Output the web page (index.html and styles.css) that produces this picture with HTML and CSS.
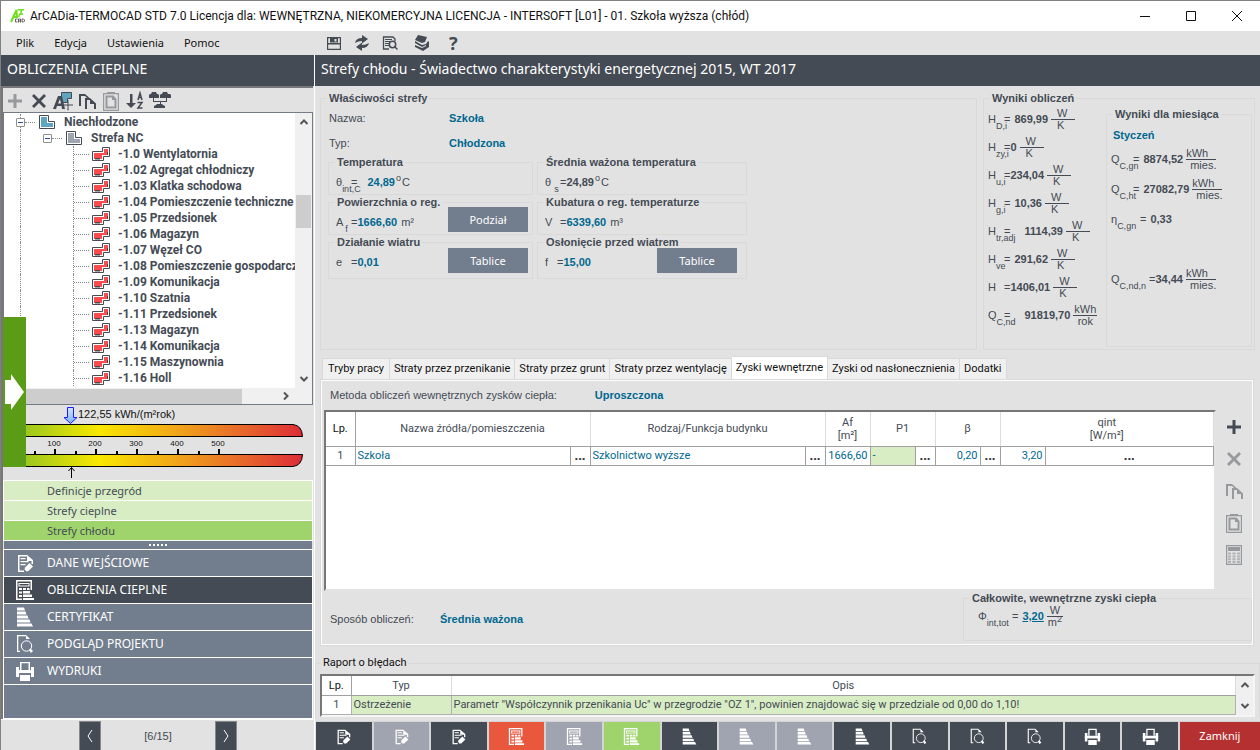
FILE: index.html
```html
<!DOCTYPE html>
<html lang="pl">
<head>
<meta charset="utf-8">
<title>ArCADia-TERMOCAD</title>
<link rel="stylesheet" href="styles.css">
</head>
<body>
<svg class="defs" aria-hidden="true">
  <symbol id="i-edit" viewBox="0 0 20 20"><path d="M3 2h9v1.500H4.500v14H9V19H3zM12 2l6 5v4h-1.500V8H12z"/><path d="M5.500 5h5v1.200h-5zM5.500 8h8v1.200h-8zM5.500 11h5v1.200h-5z"/><path d="M14.500 10l3.500 3.500-4.500 4.500-2 .5-2-2 .5-2z"/></symbol>
  <symbol id="i-calc" viewBox="0 0 20 20"><path fill-rule="evenodd" d="M1 0h16v10h-1.500V1.500h-13v17H7V20H1zM3.500 3h11v3.500h-11zM4.500 4v1.500h9V4z"/><path d="M4 8h3v2H4zM8 8h3v2H8zM12 8h2.500v2H12zM4 11.500h3v2H4zM4 15h3v2H4zM8 11h7v2.500H8zM8 14.500h9V17H8zM8 18h11v2H8z"/></symbol>
  <symbol id="i-bars" viewBox="0 0 20 20"><path d="M2 .5h7l1 3H2zM2 4.500h8.500l1 3H2zM2 8.500h10.500l1 3H2zM2 12.500h12.500l1 3H2zM2 16.500h14.500l1.500 3H2z"/></symbol>
  <symbol id="i-view" viewBox="0 0 20 20"><path d="M2 1h9l4 4h-4V2.200H3.300v14.600H5V18H2z"/><circle cx="11.500" cy="12" r="5.200" fill="none" stroke="currentColor" stroke-width="1"/><path d="M14 16l1.500-1.500L18 17l-2 2z"/></symbol>
  <symbol id="i-print" viewBox="0 0 20 20"><path fill-rule="evenodd" d="M5 1h10v8h-1.500V2.300h-7V9H5zM1 6h3v4h12V6h3v10h-3v-4H4v4H1z"/><path d="M1 9h18v3H1zM5 14h10v6H5z"/></symbol>
  <symbol id="i-plus" viewBox="0 0 20 20"><path d="M8.500 3h3v5.500H17v3h-5.500V17h-3v-5.500H3v-3h5.500z"/></symbol>
  <symbol id="i-x" viewBox="0 0 20 20"><path d="M3 5l2-2 5 5 5-5 2 2-5 5 5 5-2 2-5-5-5 5-2-2 5-5z"/></symbol>
  <symbol id="i-copy" viewBox="0 0 20 20"><path d="M2 3h6l4 3.500V9h-1.500V7.500L8 5H4v10H2zM8 7h5l6 5.500V18h-2v-5h-4V9h-3v9H8z"/></symbol>
  <symbol id="i-paste" viewBox="0 0 20 20"><path fill-rule="evenodd" d="M6 1h8v1h4v18H2V2h4zM3.200 3.200v15.600h13.600V3.200zM4.500 4.500h8L15.500 8v9.500h-11zM6.500 6.500v9h7V9H11V6.500z"/></symbol>
  <symbol id="i-table" viewBox="0 0 20 20"><path fill-rule="evenodd" d="M2 0h16v20H2zM3.200 1.200v17.600h13.600V1.200z"/><path d="M4 2h12v4H4z"/><path opacity=".65" d="M4 7.500h3v2H4zM8.500 7.500h3v2h-3zM13 7.500h3v2h-3zM4 10.500h3v2H4zM8.500 10.500h3v2h-3zM13 10.500h3v2h-3zM4 13.300h3v2H4zM8.500 13.300h3v2h-3zM13 13.300h3v2h-3zM4 16h3v2H4zM8.500 16h3v2h-3zM13 16h3v2h-3z"/></symbol>
  <symbol id="i-room" viewBox="0 0 18 16"><path fill="#fff" stroke="#444b54" d="M.5 5.500h10v-4h7v9h-6v4H.5z"/><path fill="#fb4b4d" d="M2 7h10V3h4v6h-6v4H2z"/><path fill="#444b54" d="M3 12h5v1.500H3zM15 6h1v3h-1z"/></symbol>
  <symbol id="i-zone" viewBox="0 0 16 14"><path fill="#fff" stroke="#444b54" d="M.5.500h9v6h6v7H.5z"/><path d="M2 2h6v6h6v4H2z"/></symbol>
  <symbol id="i-up" viewBox="0 0 10 10"><path fill="none" stroke="currentColor" stroke-width="2" d="M1.500 7L5 3.500 8.500 7"/></symbol>
  <symbol id="i-down" viewBox="0 0 10 10"><path fill="none" stroke="currentColor" stroke-width="2" d="M1.500 3L5 6.500 8.500 3"/></symbol>
  <symbol id="i-right" viewBox="0 0 10 10"><path fill="none" stroke="currentColor" stroke-width="2" d="M3 1.500L6.500 5 3 8.500"/></symbol>
</svg>

<header class="titlebar">
  <svg class="logo" viewBox="0 0 16 16"><path fill="none" stroke="#6fe01c" stroke-width="2" d="M1 14L6.500 2l.5 8M3 9h4"/><path fill="none" stroke="#6fe01c" stroke-width="1.500" d="M7.500 1.800H14M11.500 2l-1 5M8.500 9l1.500-3h3"/><path fill="none" stroke="#555" stroke-width=".9" d="M7.500 11H5.500v3h2M8.500 14.500V11h2v3.500M8.500 13h2M12 11v3h1.500l1-1v-1l-1-1z"/></svg>
  <h1 class="title">ArCADia-TERMOCAD STD 7.0 Licencja dla: WEWNĘTRZNA, NIEKOMERCYJNA LICENCJA - INTERSOFT [L01] - 01. Szkoła wyższa (chłód)</h1>
  <button class="win" aria-label="Minimalizuj"><svg viewBox="0 0 12 12"><path d="M1 6.500h10"/></svg></button>
  <button class="win" aria-label="Maksymalizuj"><svg viewBox="0 0 12 12"><path d="M1.500 1.500h9v9h-9z"/></svg></button>
  <button class="win" aria-label="Zamknij okno"><svg viewBox="0 0 12 12"><path d="M1 1l10 10M11 1L1 11"/></svg></button>
</header>

<nav class="menubar">
  <div class="menus"><button>Plik</button><button>Edycja</button><button>Ustawienia</button><button>Pomoc</button></div>
  <div class="quick">
    <button aria-label="Zapisz"><svg viewBox="0 0 16 16"><path fill-rule="evenodd" d="M1 2h14v13H1zM2.200 3.200V8h11.600V3.200H12V7.500H4V3.200zM2.200 9.500v4.300h11.600V9.500zM8.500 4h2v2.500h-2z"/></svg></button>
    <button aria-label="Odśwież"><svg viewBox="0 0 16 16"><path d="M1 8q1-5 7-5V0l6 4-6 4.500V6Q4 6 1 8zM15 8q-1 5-7 5v3l-6-4 6-4.500V10q4 0 7-2z"/></svg></button>
    <button aria-label="Podgląd"><svg viewBox="0 0 16 16"><path fill="none" stroke="currentColor" stroke-width="1.300" d="M7 14H1.500V2H11l2 2v2"/><path d="M3 4h7v1H3zM3 6h5v1H3zM3 8h4v1H3zM3 10h4v1H3z"/><circle cx="10.500" cy="9.500" r="3.200" fill="none" stroke="currentColor" stroke-width="1.500"/><path d="M12 12l1-1 3 3-1 1z"/></svg></button>
    <button aria-label="Biblioteka"><svg viewBox="0 0 16 16"><path d="M1 5l3-5 9 2-2 5-3 1zM1 6l7 4 4-1 2-3 1 1v5l-6 4-8-4v-2l7 3 4-2v-1l-4 2-7-4z"/></svg></button>
    <button class="help" aria-label="Pomoc programu">?</button>
  </div>
</nav>

<div class="workspace">
  <aside class="side">
    <h2 class="bar">OBLICZENIA CIEPLNE</h2>
    <div class="side-box">
      <div class="tree-tools">
        <button class="off" aria-label="Dodaj"><svg class="ic"><use href="#i-plus"/></svg></button>
        <button aria-label="Usuń"><svg class="ic"><use href="#i-x"/></svg></button>
        <button aria-label="Wstaw strefę"><svg class="ic" viewBox="0 0 20 20"><path fill="#5ea5c0" stroke="#444b54" d="M8.500 1.500h10v6h-4v4h-6z"/><path fill-rule="evenodd" d="M0 18L5 5h4l3 13H9l-.5-3H4l-1 3zM5 12.500h3L7 8z"/><path d="M14 10h2l-1-1zM14.500 10h1v8h-1zM11 13.500h8v1h-8zM14 18h2l-1 1.500zM19 13l1 1-1 1z"/></svg></button>
        <button aria-label="Kopiuj"><svg class="ic"><use href="#i-copy"/></svg></button>
        <button class="off" aria-label="Wklej"><svg class="ic"><use href="#i-paste"/></svg></button>
        <button aria-label="Sortuj"><svg class="ic" viewBox="0 0 20 20"><path d="M5 3h2.500v9H11l-5 5-5-5h4z"/><path fill="none" stroke="currentColor" stroke-width="1.500" d="M13 9l2-7 2 7M13.500 6.500h3M12.500 11.500H17L13 17h4.500"/></svg></button>
        <button aria-label="Struktura"><svg class="ic wide" viewBox="0 0 22 20"><path d="M0 4l1-1h1l1-2h4l1 2h1l1 1v3H0zM11 4l1-1h1l1-2h4l1 2h2l1 1v3H11zM4 7h1v3h12V7h1v4h-6v3h-1v-3H4zM5 15l2-1 1-1h5l1 1 2 1v2H5z"/></svg></button>
      </div>
      <div class="tree-wrap">
        <div class="tree">
          <div class="node n1"><i class="exp"></i><svg class="zone blue"><use href="#i-zone"/></svg>Niechłodzone</div>
          <div class="node n2"><i class="exp"></i><svg class="zone gray"><use href="#i-zone"/></svg>Strefa NC</div>
          <div class="node n3"><svg class="room"><use href="#i-room"/></svg>-1.0 Wentylatornia</div>
          <div class="node n3"><svg class="room"><use href="#i-room"/></svg>-1.02 Agregat chłodniczy</div>
          <div class="node n3"><svg class="room"><use href="#i-room"/></svg>-1.03 Klatka schodowa</div>
          <div class="node n3"><svg class="room"><use href="#i-room"/></svg>-1.04 Pomieszczenie techniczne</div>
          <div class="node n3"><svg class="room"><use href="#i-room"/></svg>-1.05 Przedsionek</div>
          <div class="node n3"><svg class="room"><use href="#i-room"/></svg>-1.06 Magazyn</div>
          <div class="node n3"><svg class="room"><use href="#i-room"/></svg>-1.07 Węzeł CO</div>
          <div class="node n3"><svg class="room"><use href="#i-room"/></svg>-1.08 Pomieszczenie gospodarcze</div>
          <div class="node n3"><svg class="room"><use href="#i-room"/></svg>-1.09 Komunikacja</div>
          <div class="node n3"><svg class="room"><use href="#i-room"/></svg>-1.10 Szatnia</div>
          <div class="node n3"><svg class="room"><use href="#i-room"/></svg>-1.11 Przedsionek</div>
          <div class="node n3"><svg class="room"><use href="#i-room"/></svg>-1.13 Magazyn</div>
          <div class="node n3"><svg class="room"><use href="#i-room"/></svg>-1.14 Komunikacja</div>
          <div class="node n3"><svg class="room"><use href="#i-room"/></svg>-1.15 Maszynownia</div>
          <div class="node n3"><svg class="room"><use href="#i-room"/></svg>-1.16 Holl</div>
        </div>
        <div class="vscroll"><svg class="arr"><use href="#i-up"/></svg><i class="thumb"></i><svg class="arr"><use href="#i-down"/></svg></div>
        <div class="hscroll"><i class="thumb"></i><svg class="arr"><use href="#i-right"/></svg></div>
      </div>
      <svg class="gauge" viewBox="0 0 309 75" role="img" aria-label="Wskaźnik energii">
        <defs><linearGradient id="heat"><stop offset="0" stop-color="#6fae1e"/><stop offset=".08" stop-color="#9dc81e"/><stop offset=".32" stop-color="#f9e800"/><stop offset=".6" stop-color="#f0a01c"/><stop offset=".85" stop-color="#e5592e"/><stop offset="1" stop-color="#dd2c38"/></linearGradient>
        <linearGradient id="drop" x1="0" x2="0" y1="0" y2="1"><stop offset="0" stop-color="#cfe6fa"/><stop offset="1" stop-color="#7ab2f0"/></linearGradient></defs>
        <path fill="url(#heat)" stroke="#000" d="M0 19.500h290q9 1 9.500 12H0z"/>
        <path fill="url(#heat)" stroke="#000" d="M0 49.500h299.500q-.5 11-9.500 12H0z"/>
        <path fill="url(#drop)" stroke="#1b1bff" d="M64.500 2.500h6v10h3.500L67.500 18.500l-6.500-6h3.500z"/>
        <path fill="#000" d="M31 46h2v3h-2zM51 44h2v5h-2zM72 46h2v3h-2zM92 44h2v5h-2zM113 46h2v3h-2zM133 44h2v5h-2zM154 46h2v3h-2zM174 44h2v5h-2zM195 46h2v3h-2zM215 44h2v5h-2z"/>
        <path fill="none" stroke="#000" d="M68.500 73V62.500M65.500 66l3-3.500 3 3.500"/>
        <text x="75" y="13" class="g-val">122,55 kWh/(m²rok)</text>
        <g class="g-tick"><text x="51" y="41">100</text><text x="92" y="41">200</text><text x="133" y="41">300</text><text x="174" y="41">400</text><text x="215" y="41">500</text></g>
      </svg>
      <div class="subnav"><a href="#">Definicje przegród</a><a href="#">Strefy cieplne</a><a href="#" class="on">Strefy chłodu</a></div>
      <div class="splitter"><i></i><i></i><i></i><i></i><i></i></div>
      <div class="mainnav">
        <a href="#"><svg class="ic"><use href="#i-edit"/></svg>DANE WEJŚCIOWE</a>
        <a href="#" class="on"><svg class="ic"><use href="#i-calc"/></svg>OBLICZENIA CIEPLNE</a>
        <a href="#"><svg class="ic"><use href="#i-bars"/></svg>CERTYFIKAT</a>
        <a href="#"><svg class="ic"><use href="#i-view"/></svg>PODGLĄD PROJEKTU</a>
        <a href="#"><svg class="ic"><use href="#i-print"/></svg>WYDRUKI</a>
        <div class="rest"></div>
      </div>
    </div>
    <div class="pager">
      <button aria-label="Poprzedni"><svg viewBox="0 0 8 14"><path d="M6 1L2 7l4 6"/></svg></button>
      <span>[6/15]</span>
      <button aria-label="Następny"><svg viewBox="0 0 8 14"><path d="M2 1l4 6-4 6"/></svg></button>
    </div>
    <button class="drawer" aria-label="Rozwiń panel"><svg viewBox="0 0 23 40"><path fill="#fff" d="M2 8h6V2l13 18L8 38v-6H2z"/></svg></button>
  </aside>

  <main class="content">
    <h2 class="bar">Strefy chłodu - Świadectwo charakterystyki energetycznej 2015, WT 2017</h2>
    <section class="upper">
      <fieldset class="group props">
        <legend>Właściwości strefy</legend>
        <dl class="pairs"><dt>Nazwa:</dt><dd>Szkoła</dd><dt>Typ:</dt><dd>Chłodzona</dd></dl>
        <div class="prop-grid">
          <fieldset class="group"><legend>Temperatura</legend><div class="f"><span class="s s1">θ<sub>int,C</sub></span>=<b class="blue g9">24,89</b><sup>o</sup>C</div></fieldset>
          <fieldset class="group"><legend>Średnia ważona temperatura</legend><div class="f"><span class="s s1">θ<sub class="far">s</sub></span>=<b>24,89</b><sup>o</sup>C</div></fieldset>
          <fieldset class="group"><legend>Powierzchnia o reg.</legend><div class="f"><span class="s s1">A<sub class="near">f</sub></span>=<b class="blue">1666,60</b><span class="unit">m²</span></div><button class="btn">Podział</button></fieldset>
          <fieldset class="group"><legend>Kubatura o reg. temperaturze</legend><div class="f"><span class="s s1">V</span>=<b class="blue">6339,60</b><span class="unit">m³</span></div></fieldset>
          <fieldset class="group tall"><legend>Działanie wiatru</legend><div class="f"><span class="s s1">e</span>=<b class="blue">0,01</b></div><button class="btn">Tablice</button></fieldset>
          <fieldset class="group tall"><legend>Osłonięcie przed wiatrem</legend><div class="f"><span class="s s2">f</span>=<b class="blue">15,00</b></div><button class="btn inner">Tablice</button></fieldset>
        </div>
      </fieldset>
      <fieldset class="group results">
        <legend>Wyniki obliczeń</legend>
        <div class="list">
          <div class="f"><span class="s">H<sub>D,i</sub></span>=<b class="g4">869,99</b><span class="fr"><i>W</i><i>K</i></span></div>
          <div class="f"><span class="s">H<sub>zy,i</sub></span>=<b>0</b><span class="fr"><i>W</i><i>K</i></span></div>
          <div class="f"><span class="s">H<sub>u,i</sub></span>=<b>234,04</b><span class="fr"><i>W</i><i>K</i></span></div>
          <div class="f"><span class="s">H<sub>g,i</sub></span>=<b class="g4">10,36</b><span class="fr"><i>W</i><i>K</i></span></div>
          <div class="f"><span class="s">H<sub>tr,adj</sub></span>=<b class="g14">1114,39</b><span class="fr"><i>W</i><i>K</i></span></div>
          <div class="f"><span class="s">H<sub>ve</sub></span>=<b class="g4">291,62</b><span class="fr"><i>W</i><i>K</i></span></div>
          <div class="f"><span class="s">H</span>=<b>1406,01</b><span class="fr"><i>W</i><i>K</i></span></div>
          <div class="f"><span class="s">Q<sub>C,nd</sub></span>=<b class="g14">91819,70</b><span class="fr fit"><i>kWh</i><i>rok</i></span></div>
        </div>
        <fieldset class="group month">
          <legend>Wyniki dla miesiąca</legend>
          <strong class="blue">Styczeń</strong>
          <div class="f"><span class="s s1">Q<sub>C,gn</sub></span>=<b class="g4">8874,52</b><span class="fr mies"><i>kWh</i><i>mies.</i></span></div>
          <div class="f"><span class="s s1">Q<sub>C,ht</sub></span>=<b class="g4">27082,79</b><span class="fr mies"><i>kWh</i><i>mies.</i></span></div>
          <div class="f"><span class="s s3">η<sub>C,gn</sub></span>=<b class="g4">0,33</b></div>
          <div class="f last"><span class="s s4">Q<sub>C,nd,n</sub></span>=<b>34,44</b><span class="fr mies"><i>kWh</i><i>mies.</i></span></div>
        </fieldset>
      </fieldset>
    </section>

    <div class="tabs" role="tablist">
      <button role="tab">Tryby pracy</button><button role="tab">Straty przez przenikanie</button><button role="tab">Straty przez grunt</button><button role="tab">Straty przez wentylację</button><button role="tab" class="on" aria-selected="true">Zyski wewnętrzne</button><button role="tab">Zyski od nasłonecznienia</button><button role="tab">Dodatki</button>
    </div>
    <section class="panel">
      <div class="method"><span>Metoda obliczeń wewnętrznych zysków ciepła:</span><strong class="blue">Uproszczona</strong></div>
      <div class="panel-mid">
        <div class="sheet">
          <table class="grid gains">
            <colgroup><col class="c-lp"><col class="c-name"><col class="c-dot"><col class="c-name"><col class="c-dot"><col class="c-num"><col class="c-num"><col class="c-dot"><col class="c-num"><col class="c-dot"><col class="c-num"><col></colgroup>
            <thead><tr><th class="lp">Lp.</th><th colspan="2">Nazwa źródła/pomieszczenia</th><th colspan="2">Rodzaj/Funkcja budynku</th><th>Af<br>[m²]</th><th colspan="2">P1</th><th colspan="2">β</th><th colspan="2">qint<br>[W/m²]</th></tr></thead>
            <tbody><tr><td class="lp">1</td><td>Szkoła</td><td class="dots"><button>...</button></td><td>Szkolnictwo wyższe</td><td class="dots"><button>...</button></td><td class="num">1666,60</td><td class="green">-</td><td class="dots"><button>...</button></td><td class="num">0,20</td><td class="dots"><button>...</button></td><td class="num">3,20</td><td class="dots"><button>...</button></td></tr></tbody>
          </table>
        </div>
        <div class="vtools">
          <button aria-label="Dodaj wiersz"><svg class="ic"><use href="#i-plus"/></svg></button>
          <button class="off" aria-label="Usuń wiersz"><svg class="ic"><use href="#i-x"/></svg></button>
          <button class="off" aria-label="Kopiuj wiersz"><svg class="ic"><use href="#i-copy"/></svg></button>
          <button class="off" aria-label="Wklej wiersz"><svg class="ic"><use href="#i-paste"/></svg></button>
          <button class="off" aria-label="Kalkulator"><svg class="ic"><use href="#i-table"/></svg></button>
        </div>
      </div>
      <div class="panel-foot">
        <span class="way">Sposób obliczeń:</span><strong class="blue">Średnia ważona</strong>
        <fieldset class="group total"><legend>Całkowite, wewnętrzne zyski ciepła</legend><div class="f"><span class="s s5">Φ<sub>int,tot</sub></span>=<b class="g4 blue under">3,20</b><span class="fr fit"><i>W</i><i>m<sup>2</sup></i></span></div></fieldset>
      </div>
    </section>

    <fieldset class="group report">
      <legend>Raport o błędach</legend>
      <div class="sheet-row">
        <div class="report-sheet">
        <table class="grid errors">
          <colgroup><col class="c-lp"><col class="c-typ"><col></colgroup>
          <thead><tr><th class="lp">Lp.</th><th>Typ</th><th>Opis</th></tr></thead>
          <tbody><tr><td class="lp">1</td><td>Ostrzeżenie</td><td>Parametr "Współczynnik przenikania Uc" w przegrodzie "OZ 1", powinien znajdować się w przedziale od 0,00 do 1,10!</td></tr><tr class="next"><td class="lp"></td><td></td><td></td></tr></tbody>
        </table>
        </div>
        <div class="vscroll"><svg class="arr"><use href="#i-up"/></svg><svg class="arr"><use href="#i-down"/></svg></div>
      </div>
    </fieldset>

    <footer class="actions">
      <button aria-label="Dane 1"><svg class="ic"><use href="#i-edit"/></svg></button>
      <button class="pale" aria-label="Dane 2"><svg class="ic"><use href="#i-edit"/></svg></button>
      <button aria-label="Dane 3"><svg class="ic"><use href="#i-edit"/></svg></button>
      <button class="red" aria-label="Obliczenia 1"><svg class="ic"><use href="#i-calc"/></svg></button>
      <button class="pale" aria-label="Obliczenia 2"><svg class="ic"><use href="#i-calc"/></svg></button>
      <button class="lime" aria-label="Obliczenia 3"><svg class="ic"><use href="#i-calc"/></svg></button>
      <button aria-label="Certyfikat 1"><svg class="ic"><use href="#i-bars"/></svg></button>
      <button class="pale" aria-label="Certyfikat 2"><svg class="ic"><use href="#i-bars"/></svg></button>
      <button class="pale" aria-label="Certyfikat 3"><svg class="ic"><use href="#i-bars"/></svg></button>
      <button aria-label="Certyfikat 4"><svg class="ic"><use href="#i-bars"/></svg></button>
      <button aria-label="Podgląd 1"><svg class="ic"><use href="#i-view"/></svg></button>
      <button aria-label="Podgląd 2"><svg class="ic"><use href="#i-view"/></svg></button>
      <button aria-label="Podgląd 3"><svg class="ic"><use href="#i-view"/></svg></button>
      <button aria-label="Wydruk 1"><svg class="ic"><use href="#i-print"/></svg></button>
      <button aria-label="Wydruk 2"><svg class="ic"><use href="#i-print"/></svg></button>
      <button class="close">Zamknij</button>
    </footer>
  </main>
</div>
</body>
</html>
```
FILE: styles.css
```css
* { box-sizing: border-box; }
body {
  margin: 0; height: 100vh; display: flex; flex-direction: column; overflow: hidden;
  border: solid #808080; border-width: 1px 0 0 1px;
  background: #e2e2e2; color: #444b54;
  font: 11px/14px "Liberation Sans", sans-serif;
}
button { border: 0; padding: 0; margin: 0; background: none; color: inherit; font: inherit; }
a { color: inherit; text-decoration: none; }
h1, h2, dl, dd { margin: 0; }
svg { display: block; fill: currentColor; }
.defs { display: none; }
.ic { width: 20px; height: 20px; }
.ic.wide { width: 22px; }
.blue { color: #006890; }
.off { color: #96999e; }

.titlebar { flex: none; height: 30px; display: flex; align-items: center; background: #fff; color: #111; }
.logo { width: 16px; height: 16px; margin: 0 4px 0 9px; }
.title { flex: 1; font: 12px/16px Roboto, sans-serif; white-space: nowrap; }
.win { width: 46px; height: 30px; display: grid; place-items: center; }
.win svg { width: 12px; height: 12px; fill: none; stroke: #111; }

.menubar { flex: none; height: 24px; display: flex; font: 11px/24px "Noto Sans", sans-serif; color: #111; }
.menus { width: 325px; padding-left: 15px; display: flex; gap: 20px; }
.quick { display: flex; align-items: center; gap: 12px; color: #444b54; }
.quick svg { width: 16px; height: 16px; }
.quick button:nth-child(n+4) { margin-left: 4px; }
.quick .help { font: bold 18px/20px "Noto Sans", sans-serif; padding-left: 3px; }

.workspace { flex: 1; min-height: 0; display: grid; grid-template-columns: 313px 1fr; }
.bar { flex: none; height: 31px; padding: 0 6px; background: #444b54; color: #fff; font: 14px/27px "Noto Sans", sans-serif; white-space: nowrap; }

.side { position: relative; display: flex; flex-direction: column; min-height: 0; }
.side-box { flex: 1; min-height: 0; display: flex; flex-direction: column; border-left: 2px solid #777; border-top: 2px solid #777; margin-right: 1px; }
.tree-tools { flex: none; height: 24px; display: flex; align-items: center; gap: 4px; padding: 1px 0 0 2px; }
.tree-wrap { flex: 1; min-height: 0; display: grid; grid-template: minmax(0, 1fr) 16px / minmax(0, 1fr) 17px; border: 1px solid #747b86; background: #fff; }
.tree { overflow: hidden; background: #fff; font: bold 12px/16px Roboto, sans-serif; padding-top: 1px; }
.node { height: 16px; display: flex; align-items: center; white-space: nowrap; border-left: 1px dotted #888; margin-left: 16px; }
.node svg { flex: none; }
.exp { flex: none; width: 9px; height: 9px; border: 1px solid #8f8f8f; border-radius: 1px; background: linear-gradient(#2b4f9a, #2b4f9a) center / 5px 1px no-repeat #fff; margin-left: -5px; }
.n2 .exp { margin-left: 22px; }
.exp::after { content: ""; display: block; width: 10px; margin: 3px 0 0 8px; border-top: 1px dotted #888; }
.zone { width: 16px; height: 14px; }
.n1 .zone, .n2 .zone { margin: 0 9px 0 14px; }
.zone.blue { color: #5ea5c0; }
.zone.gray { color: #a0a4b0; }
.n3::before { content: ""; flex: none; width: 16px; height: 16px; margin: 0 2px 0 52px; border-left: 1px dotted #888; background: linear-gradient(90deg, #888 50%, transparent 50%) 0 8px / 2px 1px repeat-x; }
.room { width: 18px; height: 16px; margin-right: 8px; }
.vscroll { display: flex; flex-direction: column; align-items: center; justify-content: space-between; background: #f0f0f0; color: #555; padding: 4px 0; }
.arr { width: 10px; height: 10px; }
.tree-wrap .vscroll .thumb { width: 15px; height: 33px; background: #cdcdcd; margin-bottom: 78px; }
.hscroll { grid-column: 1 / 3; display: flex; align-items: center; gap: 39px; background: #f0f0f0; color: #555; }
.hscroll .thumb { width: 238px; height: 15px; background: #cdcdcd; }
.gauge { flex: none; width: 309px; height: 75px; }
.g-val { font: 11px "Liberation Sans", sans-serif; fill: #111; }
.g-tick { font: 8px "Liberation Sans", sans-serif; text-anchor: middle; fill: #111; }
.subnav { flex: none; display: grid; gap: 1px; background: #fff; padding: 1px; color: #444b54; font: 11px/19px "Noto Sans", sans-serif; }
.subnav a { padding-left: 43px; background: #d9edc4; }
.subnav a.on { background: #9fd46c; }
.splitter { flex: none; height: 8px; margin: 0 1px; background: #727d8d; display: flex; justify-content: center; align-items: center; gap: 2px; }
.splitter i { width: 2px; height: 2px; background: #fff; }
.mainnav { flex: none; display: grid; gap: 1px; background: #fff; padding: 1px; color: #fff; font: 12px/26px "Noto Sans", sans-serif; }
.mainnav a { display: flex; align-items: center; gap: 12px; padding-left: 11px; background: #727d8d; }
.mainnav a.on { background: #444b54; }
.mainnav .rest { height: 33px; background: #727d8d; }
.pager { flex: none; height: 31px; padding: 1px 77px 0 78px; display: flex; justify-content: space-between; align-items: center; border-top: 1px solid #fff; }
.pager button { width: 22px; height: 29px; display: grid; place-items: center; background: #444b54; border: 1px solid #888; border-bottom: 0; }
.pager svg { width: 8px; height: 14px; fill: none; stroke: #fff; }
.drawer { position: absolute; left: 2px; top: 262px; width: 23px; height: 150px; background: #5b9c16; display: grid; align-items: center; }
.drawer svg { width: 23px; height: 40px; }

.content { display: flex; flex-direction: column; min-width: 0; min-height: 0; border-left: 1px solid #fff; }
.group { min-width: 0; margin: 0; padding: 0; border: 1px solid #d9d9d9; }
.group > legend { margin-left: 6px; padding: 0 2px; font: bold 11px/12px "Liberation Sans", sans-serif; }
.upper { flex: none; display: grid; grid-template-columns: minmax(0, 1fr) 272px; gap: 6px; padding: 6px 5px 0; min-height: 264px; }
.pairs { display: grid; grid-template-columns: 120px 1fr; line-height: 25px; padding: 2px 0 0 8px; }
.pairs dd { font-weight: bold; color: #006890; }
.prop-grid { display: grid; grid-template-columns: 205px 210px; gap: 1px 4px; padding-left: 7px; }
.prop-grid .group { height: 39px; display: flex; position: relative; }
.prop-grid .group.tall { height: 43px; }
.prop-grid .f { height: 28px; padding-left: 7px; }
.btn { width: 80px; height: 25px; background: #727d8d; color: #fff; font: 11px/23px "Noto Sans", sans-serif; position: absolute; right: 4px; top: -1px; }
.tall .btn { top: 0; }
.btn.inner { right: 9px; }

.f { display: flex; align-items: center; height: 28px; white-space: nowrap; }
.s { width: 16px; flex: none; }
.s1 { width: 15px; }
.s2 { width: 12px; }
.month .s1 { width: 22px; }
.s3 { width: 29px; }
.s4 { width: 38px; }
.s5 { width: 34px; }
sub, sup { font-size: 9px; line-height: 0; }
sub { vertical-align: -6px; }
sup { vertical-align: 4px; }
.f > sup { align-self: flex-start; line-height: 20px; margin: 0 1px; }
sub.far { margin-left: 3px; }
sub.near { margin-left: 2px; }
.g4 { margin-left: 4px; }
.g9 { margin-left: 10px; }
.g14 { margin-left: 14px; }
.unit { margin-left: 4px; }
.under { text-decoration: underline; }
.fr { margin-left: 3px; width: 24px; line-height: 11px; }
.fr i { display: block; font-style: normal; padding-left: 6px; }
.fr i:first-child { border-bottom: 1px solid #444b54; }
.fr.fit { width: auto; text-align: center; }
.fr.fit i { padding: 0 1px; }
.fr.mies { width: 30px; }
.fr.mies i:first-child { padding-left: 0; }
.fr.mies i { padding-left: 4px; }
.results { display: grid; grid-template-columns: 122px minmax(0, 1fr); }
.results .list { padding: 1px 0 0 4px; }
.month { margin: 4px 2px 2px 0; }
.month strong { display: block; padding: 8px 0 0 6px; height: 24px; }
.month .f { height: 30px; padding-left: 4px; }
.month .f.last { margin-top: 30px; }

.tabs { flex: none; display: flex; align-items: flex-end; height: 29px; padding-left: 7px; color: #111; font: 11px/20px Roboto, sans-serif; }
.tabs button { height: 21px; padding: 0 4px; background: #f0f0f0; border: 1px solid #d9d9d9; border-width: 1px 1px 0 0; white-space: nowrap; }
.tabs button:first-child { padding: 0 5px; border-left-width: 1px; }
.tabs button.on { height: 23px; background: #fff; }
.panel { flex: 1; min-height: 0; margin: 0 6px 0 5px; display: flex; flex-direction: column; border: 1px solid #d9d9d9; box-shadow: inset 0 0 0 1px #fff; padding: 1px 1px 3px 3px; }
.method { flex: none; display: flex; padding: 0 6px; gap: 38px; height: 29px; line-height: 29px; }
.panel-mid { flex: 1; min-height: 0; display: flex; }
.sheet { flex: 1; min-width: 0; background: #fff; border: 2px solid #777; border-color: #777 #e3e3e3 #e3e3e3 #777; }
.grid { width: 100%; border-collapse: collapse; table-layout: fixed; font: 11px/13px Roboto, sans-serif; }
.grid th, .grid td { padding: 0 2px; border: 1px solid #a0a0a0; overflow: hidden; white-space: nowrap; font-weight: normal; text-align: left; }
.grid th { text-align: center; border-color: #dcdcdc; border-bottom-color: #a0a0a0; border-top: 0; }
.grid th.lp { text-align: center; color: #111; border-left: 0; border-right-color: #a0a0a0; }
.gains th { height: 34px; }
.gains td { height: 19px; color: #006890; }
.gains .num { text-align: right; }
.gains .green, .errors td { background: #d9edc4; }
.gains td.dots { color: #333; text-align: center; padding: 0; }
.dots button { width: 100%; font: bold 13px/13px "Noto Sans", sans-serif; }
.grid td.lp { text-align: center; border-left: 0; background: #fff; color: #444b54; }
.c-lp { width: 29px; }
.c-name { width: 215px; }
.c-dot { width: 20px; }
.c-num { width: 45px; }
.c-typ { width: 100px; }
.vtools { flex: none; width: 36px; padding-top: 7px; display: flex; flex-direction: column; align-items: center; gap: 12px; }
.panel-foot { flex: none; height: 51px; display: flex; align-items: center; padding-left: 6px; }
.panel-foot .way { width: 110px; margin-top: 4px; }
.panel-foot strong { margin-top: 4px; }
.total { margin-left: auto; width: 289px; height: 49px; }
.total .f { height: 24px; padding-left: 14px; }

.report { flex: none; height: 62px; margin-top: 10px; padding: 4px 4px 0; border-bottom: 0; }
.report > legend { margin-left: 1px; font: 11px/14px Roboto, sans-serif; color: #111; }
.sheet-row { display: flex; height: 43px; border: 2px solid #777; border-color: #777 #f5f5f5 #f5f5f5 #777; background: #fff; }
.report-sheet { flex: 1; min-width: 0; overflow: hidden; }
.sheet-row .vscroll { width: 17px; }
.errors th, .errors td { height: 19px; }
.errors td { border-color: #b0b0b0; }
.actions { flex: none; height: 29px; display: flex; margin-top: 3px; padding-left: 1px; color: #fff; }
.actions button { flex: 1 1 0; min-width: 0; display: grid; place-items: center; background: #444b54; border: solid #d4d4d4; border-width: 1px 2px 0 0; }
.actions .ic { width: 17px; height: 17px; }
.actions .pale { background: #a0a4b0; }
.actions .red { background: #e9573d; }
.actions .lime { background: #9fd46c; }
.actions .close { flex: 0 0 80px; background: #b53030; border-right: 0; font: 11px/16px "Noto Sans", sans-serif; }
```
